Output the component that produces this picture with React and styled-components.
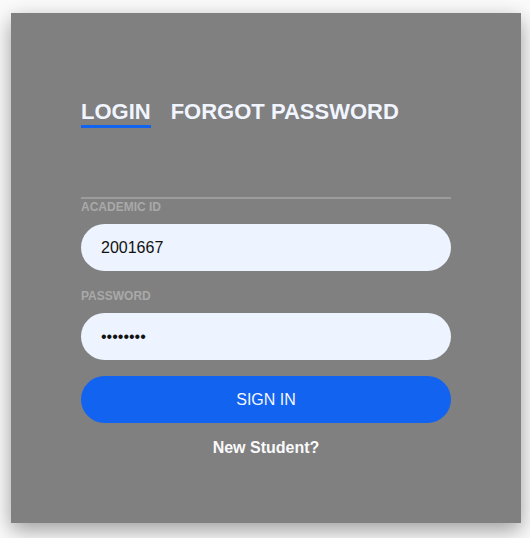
import React from "react";
import styled, { createGlobalStyle } from "styled-components";

const GlobalStyle = createGlobalStyle`
    body {
        margin: 0;
        background: #fbfbfb;
        font-family: "Liberation Sans", Arial, sans-serif;
    }
`;

const Page = styled.div`
    padding: 13px 0 0 11px;
    min-height: 538px;
    box-sizing: border-box;
`;

const Card = styled.div`
    width: 510px;
    height: 510px;
    box-sizing: border-box;
    background: #808080;
    padding: 86px 70px 0;
    box-shadow: 0 7px 20px rgba(0, 0, 0, 0.38);
    display: flex;
    flex-direction: column;
`;

const Tabs = styled.div`
    display: flex;
    gap: 20px;
    align-items: flex-start;
`;

const Tab = styled.div`
    font-size: 22px;
    font-weight: 700;
    line-height: 25px;
    color: #f1f5ff;
    padding-bottom: 1px;
    border-bottom: 3px solid ${(p) => (p.active ? "#1163f0" : "transparent")};
    cursor: pointer;
`;

const Divider = styled.div`
    height: 2px;
    background: #9c9c9c;
    margin-top: 69px;
`;

const Label = styled.label`
    display: block;
    font-size: 12px;
    font-weight: 700;
    line-height: 14px;
    color: #a9a9a9;
    margin-top: ${(p) => p.top}px;
    margin-bottom: 10px;
`;

const Input = styled.input`
    display: block;
    width: 100%;
    height: 47px;
    box-sizing: border-box;
    border: none;
    outline: none;
    border-radius: 24px;
    background: #edf3ff;
    padding: 0 20px;
    font-family: "Liberation Sans", Arial, sans-serif;
    font-size: 16px;
    color: #111;
`;

const Button = styled.button`
    display: block;
    width: 100%;
    height: 47px;
    margin-top: 16px;
    border: none;
    border-radius: 24px;
    background: #1163f0;
    color: #f4f7ff;
    font-family: "Liberation Sans", Arial, sans-serif;
    font-size: 16px;
    cursor: pointer;
`;

const Footer = styled.div`
    margin-top: 16px;
    text-align: center;
    font-size: 16px;
    font-weight: 700;
    line-height: 18px;
    color: #fafafa;
`;

export default function App() {
    return (
        <Page>
            <GlobalStyle />
            <Card>
                <Tabs>
                    <Tab active>LOGIN</Tab>
                    <Tab>FORGOT PASSWORD</Tab>
                </Tabs>
                <Divider />
                <Label top={1}>ACADEMIC ID</Label>
                <Input type="text" defaultValue="2001667" />
                <Label top={18}>PASSWORD</Label>
                <Input type="password" defaultValue="12345678" />
                <Button>SIGN IN</Button>
                <Footer>New Student?</Footer>
            </Card>
        </Page>
    );
}
